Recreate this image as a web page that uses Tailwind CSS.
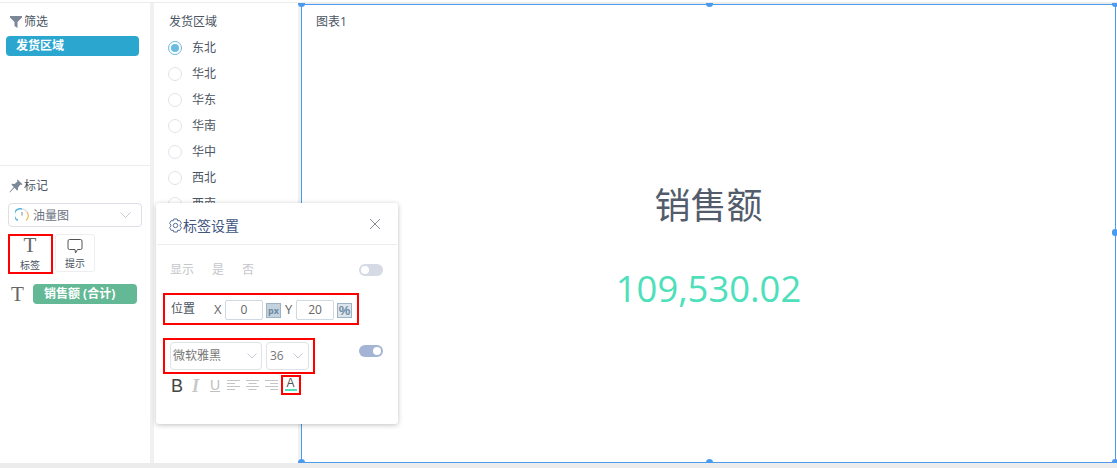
<!DOCTYPE html>
<html lang="zh">
<head>
  <meta charset="UTF-8" />
  <title>标签设置</title>
  <script src="https://cdn.jsdelivr.net/npm/@tailwindcss/browser@4"></script>
</head>
<body class="bg-white overflow-hidden font-['Open_Sans','Noto_Sans_CJK_SC',sans-serif] text-[#4b5563]">
  <div class="relative w-[1117px] h-[468px] bg-white pt-[2px] overflow-hidden">
    <div class="flex h-[461px] border-t border-[#ececec]">
      <!-- left column -->
      <div class="w-[153px] h-full bg-white flex flex-col shrink-0 border-r-[3px] border-[#f1f1f1]">
        <div class="h-[163px] shrink-0 border-b border-[#ececec] px-[6px] pt-[10px]">
          <div class="flex items-center h-[18px] pl-[4px] text-[12px]">
            <svg class="w-[12px] h-[12px] mr-[2px]" viewBox="0 0 12 12"><path d="M0 0h12v1.500L7.500 6V12L4.500 10V6L0 1.500z" fill="#7c8798"/></svg>
            <span>筛选</span>
          </div>
          <div class="mt-[5px] w-[133px] h-[20px] rounded-[4px] bg-[#2ba6cf] text-white text-[12px] font-bold leading-[20px] pl-[10px]">发货区域</div>
        </div>
        <div class="px-[8px] pt-[11px] flex-1">
          <div class="flex items-center h-[18px] text-[12px] pl-[1px]">
            <svg class="w-[14px] h-[14px] mr-[1px]" viewBox="0 0 14 14"><path d="M8.500 0.500L13.500 5.200L12.300 6L11.500 5.600L9 8.500L9 11L8 11.500L5.500 8.800L1 13.500L0.500 13L4.800 8L2.500 5.700L3 4.800L5.500 5L8.500 2.500L8 1.500z" fill="#7c8798"/></svg>
            <span>标记</span>
          </div>
          <div class="mt-[8px] w-[134px] h-[24px] border border-[#dcdfe8] rounded-[4px] flex items-center pl-[6px] pr-[10px] text-[12px] text-[#6b7280]">
            <svg class="w-[14px] h-[14px] mr-[4px]" viewBox="0 0 14 14" fill="none"><path d="M3 12.300A6 6 0 0 1 7 1" stroke="#5bb5dc" stroke-width="1.500"/><path d="M7 1A6 6 0 0 1 12 4" stroke="#dfe3ea" stroke-width="1.500"/><path d="M12 4A6 6 0 0 1 11 12.300" stroke="#f0c674" stroke-width="1.500"/><path d="M7 4v3.500" stroke="#7c8798" stroke-width="1"/></svg>
            <span class="pt-[1px]">油量图</span>
            <svg class="ml-auto w-[11px] h-[7px]" viewBox="0 0 11 7" fill="none"><path d="M0.500 0.500L5.500 5.500L10.500 0.500" stroke="#c5c9d3"/></svg>
          </div>
          <div class="flex gap-[2px] mt-[7px]">
            <div class="w-[44px] h-[38px] flex flex-col items-center">
              <span class="font-['Liberation_Serif',serif] text-[21px] leading-[22px] h-[23px] text-[#666]">T</span>
              <span class="text-[10px] leading-[12px] mt-[2px]">标签</span>
            </div>
            <div class="w-[40px] h-[38px] ml-[1px] border border-[#eceef2] rounded-[3px] flex flex-col items-center">
              <svg class="w-[16px] h-[15px] mt-[4px]" viewBox="0 0 16 15" fill="none"><path d="M2.500 0.500H13.500Q15 0.500 15 2V9Q15 10.500 13.500 10.500H10.500L8.500 14L8 10.500H2.500Q1 10.500 1 9V2Q1 0.500 2.500 0.500z" stroke="#555" stroke-width="1"/></svg>
              <span class="text-[10px] leading-[12px] mt-[3px]">提示</span>
            </div>
          </div>
          <div class="flex items-center mt-[12px] pl-[3px]">
            <span class="font-['Liberation_Serif',serif] text-[21px] leading-[20px] text-[#666] w-[22px]">T</span>
            <div class="w-[104px] h-[20px] rounded-[4px] bg-[#63b896] text-white text-[12px] font-bold leading-[20px] pl-[11px]">销售额 (合计)</div>
          </div>
        </div>
      </div>
      <!-- field list column -->
      <div class="w-[148px] h-full bg-white pl-[14px] pt-[10px] text-[12px] shrink-0 border-l border-r-[3px] border-[#f1f1f1]">
        <div class="h-[18px] leading-[18px] pl-[1px]">发货区域</div>
        <div class="mt-[4px] flex flex-col">
          <div class="h-[26px] flex items-center gap-[10px]"><span class="w-[14px] h-[14px] rounded-full border border-[#6cbbe0] flex items-center justify-center"><span class="w-[8px] h-[8px] rounded-full bg-[#6cbbe0]"></span></span>东北</div>
          <div class="h-[26px] flex items-center gap-[10px]"><span class="w-[14px] h-[14px] rounded-full border border-[#e0e3ec]"></span>华北</div>
          <div class="h-[26px] flex items-center gap-[10px]"><span class="w-[14px] h-[14px] rounded-full border border-[#e0e3ec]"></span>华东</div>
          <div class="h-[26px] flex items-center gap-[10px]"><span class="w-[14px] h-[14px] rounded-full border border-[#e0e3ec]"></span>华南</div>
          <div class="h-[26px] flex items-center gap-[10px]"><span class="w-[14px] h-[14px] rounded-full border border-[#e0e3ec]"></span>华中</div>
          <div class="h-[26px] flex items-center gap-[10px]"><span class="w-[14px] h-[14px] rounded-full border border-[#e0e3ec]"></span>西北</div>
          <div class="h-[26px] flex items-center gap-[10px]"><span class="w-[14px] h-[14px] rounded-full border border-[#e0e3ec]"></span>西南</div>
        </div>
      </div>
      <!-- chart -->
      <div class="flex-1 h-full bg-white border-t border-[#ececec] pr-[1px]">
        <div class="relative h-[459px] bg-white border border-[#4a9bee] flex flex-col items-center">
          <div class="self-start pl-[14px] pt-[8px] text-[12px] leading-[18px]">图表1</div>
          <div class="text-[36px] leading-[48px] text-[#535c6b] mt-[151px]">销售额</div>
          <div class="text-[36.4px] leading-[50px] text-[#4de0bb] mt-[33px]">109,530.02</div>
          <span class="absolute left-[-4px] top-[-2px] w-[7px] h-[4px] rounded-b-full bg-[#4a9bee]"></span>
          <span class="absolute left-[404px] top-[-2px] w-[7px] h-[4px] rounded-b-full bg-[#4a9bee]"></span>
          <span class="absolute right-[-3px] top-[-2px] w-[6px] h-[4px] rounded-b-full bg-[#4a9bee]"></span>
          <span class="absolute left-[-4px] bottom-[-1px] w-[7px] h-[4px] rounded-t-full bg-[#4a9bee]"></span>
          <span class="absolute left-[404px] bottom-[-1px] w-[7px] h-[4px] rounded-t-full bg-[#4a9bee]"></span>
          <span class="absolute right-[-3px] bottom-[-1px] w-[6px] h-[4px] rounded-t-full bg-[#4a9bee]"></span>
          <span class="absolute right-[-3px] top-[224px] w-[6px] h-[7px] rounded-full bg-[#4a9bee]"></span>
        </div>
      </div>
    </div>
    <div class="h-[5px] bg-[#ececec]"></div>

    <!-- label settings popover -->
    <div class="absolute left-[156px] top-[203px] w-[242px] h-[221px] bg-white rounded-[3px] shadow-[0_1px_5px_rgba(0,0,0,0.25)]">
      <div class="h-[42px] mx-[1px] border-b border-[#eceef2] flex items-center pl-[11px] pr-[16px] pt-[4px] text-[14px] text-[#41557f]">
        <svg class="w-[15px] h-[15px]" viewBox="0 0 15 15" fill="none" stroke="#5a6f98" stroke-width="1" stroke-linejoin="round"><path d="M5.800 1H9.200L9.800 2.900L11.700 2.500L13.400 5.400L12.100 6.900V8.100L13.400 9.600L11.700 12.500L9.800 12.100L9.200 14H5.800L5.200 12.100L3.300 12.500L1.600 9.600L2.900 8.100V6.900L1.600 5.400L3.300 2.500L5.200 2.900z"/><circle cx="7.500" cy="7.500" r="2.200"/></svg>
        <span>标签设置</span>
        <svg class="ml-auto -mt-[4px] w-[12px] h-[12px]" viewBox="0 0 12 12" fill="none" stroke="#8a8f99"><path d="M1 1L11 11M11 1L1 11"/></svg>
      </div>
      <div class="flex items-center h-[20px] mt-[15px] pl-[14px] pr-[15px] text-[12px] text-[#c4c6cb]">
        <span>显示</span><span class="ml-[18px]">是</span><span class="ml-[18px]">否</span>
        <span class="ml-auto w-[24px] h-[12px] rounded-full bg-[#d5dae5] flex items-center pl-[2px]"><span class="w-[8px] h-[8px] rounded-full bg-white"></span></span>
      </div>
      <div class="flex items-center mt-[20px] h-[20px] pl-[15px] text-[12px]">
        <span class="w-[43px] -mt-[3px]">位置</span>
        <span class="text-[#666] text-[13px] w-[11px]">X</span>
        <span class="w-[38px] h-[20px] border border-[#ced9e3] rounded-[2px] text-center leading-[18px] text-[#666]">0</span>
        <span class="ml-[3px] w-[15px] h-[15px] bg-[#c4d2de] border border-[#9fb3c5] text-[9px] leading-[13px] text-center font-bold text-[#6d8aa3]">px</span>
        <span class="ml-[4px] w-[11px] text-[13px] text-[#666]">Y</span>
        <span class="w-[38px] h-[20px] border border-[#ced9e3] rounded-[2px] text-center leading-[18px] text-[#666]">20</span>
        <span class="ml-[3px] w-[15px] h-[15px] bg-[#dce5ec] border border-[#9fb3c5] text-[13px] leading-[13px] text-center font-bold text-[#6d8aa3] overflow-hidden font-['Liberation_Sans',sans-serif]">%</span>
      </div>
      <div class="flex items-center mt-[22px] pl-[14px] pr-[15px] text-[12px] text-[#777]">
        <div class="w-[92px] h-[28px] border border-[#dfe2ea] rounded-[4px] flex items-center pl-[2px] pr-[4px]">
          <span>微软雅黑</span>
          <svg class="ml-auto w-[10px] h-[6px]" viewBox="0 0 10 6" fill="none"><path d="M0.500 0.500L5 5L9.500 0.500" stroke="#c5c9d3"/></svg>
        </div>
        <div class="ml-[4px] w-[43px] h-[28px] border border-[#dfe2ea] rounded-[4px] flex items-center pl-[3px] pr-[5px]">
          <span>36</span>
          <svg class="ml-auto w-[10px] h-[6px]" viewBox="0 0 10 6" fill="none"><path d="M0.500 0.500L5 5L9.500 0.500" stroke="#c5c9d3"/></svg>
        </div>
        <span class="ml-auto -mt-[10px] w-[24px] h-[12px] rounded-full bg-[#a4b4d4] flex items-center justify-end pr-[2px]"><span class="w-[8px] h-[8px] rounded-full bg-white"></span></span>
      </div>
      <div class="flex items-center mt-[6px] pl-[15px] h-[18px]">
        <span class="w-[12px] text-[18px] text-[#444] leading-[18px] font-['Liberation_Sans',sans-serif] mt-[1px]">B</span>
        <span class="ml-[9px] w-[8px] text-[18px] font-bold italic text-[#c8c8c8] leading-[18px] font-['Liberation_Serif',serif] mt-[1px]">I</span>
        <span class="ml-[10px] w-[9px] text-[14px] text-[#c0c0c0] underline leading-[18px] font-['Liberation_Sans',sans-serif]">U</span>
        <svg class="ml-[8px] w-[13px] h-[12px]" viewBox="0 0 13 12" fill="none" stroke="#c4c4c4"><path d="M0 1.500H13M0 4.500H8M0 7.500H13M0 10.500H8"/></svg>
        <svg class="ml-[6px] w-[13px] h-[12px]" viewBox="0 0 13 12" fill="none" stroke="#c4c4c4"><path d="M0 1.500H13M2.500 4.500H10.500M0 7.500H13M2.500 10.500H10.500"/></svg>
        <svg class="ml-[6px] w-[13px] h-[12px]" viewBox="0 0 13 12" fill="none" stroke="#c4c4c4"><path d="M0 1.500H13M5 4.500H13M0 7.500H13M5 10.500H13"/></svg>
        <div class="ml-[6px] w-[13px] self-start mt-[2px] flex flex-col items-center">
          <span class="text-[12px] leading-[10px] text-[#555] font-['Liberation_Sans',sans-serif]">A</span>
          <span class="w-[12px] h-[2px] mt-[1px] bg-[#4de0bb]"></span>
        </div>
      </div>
    </div>

    <!-- red annotation boxes -->
    <div class="absolute left-[8px] top-[234px] w-[45px] h-[40px] border-[2px] border-[#f00]"></div>
    <div class="absolute left-[163px] top-[293px] w-[196px] h-[32px] border-[2px] border-[#f00]"></div>
    <div class="absolute left-[163px] top-[338px] w-[152px] h-[36px] border-[2px] border-[#f00]"></div>
    <div class="absolute left-[281px] top-[375px] w-[20px] h-[20px] border-[2px] border-[#f00]"></div>
  </div>
</body>
</html>
